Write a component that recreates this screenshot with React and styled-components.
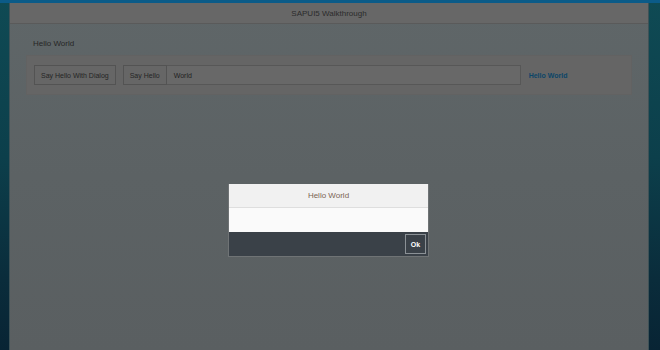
import React from "react";
import styled, { createGlobalStyle } from "styled-components";

const GlobalStyle = createGlobalStyle`
  html, body {
    margin: 0;
    padding: 0;
    background: #0c3e4a;
  }
  body {
    font-family: "Liberation Sans", Arial, sans-serif;
  }
`;

const Screen = styled.div`
  position: relative;
  width: 660px;
  height: 350px;
  overflow: hidden;
  display: flex;
  flex-direction: column;
  background: linear-gradient(180deg, #0f4a54 0%, #0c3f4b 45%, #0a2c3b 80%, #082434 100%);
`;

const TopStrip = styled.div`
  height: 3px;
  flex: none;
  background: #0b5b88;
`;

const Shell = styled.div`
  flex: 1;
  margin: 0 12px 0 10px;
  display: flex;
  flex-direction: column;
  background: linear-gradient(180deg, #5f6668 0%, #5c6264 50%, #5a5f61 100%);
  box-shadow: -1px 0 0 #3f5257, 1px 0 0 #3f5257;
`;

const ShellHeader = styled.div`
  height: 20px;
  flex: none;
  display: flex;
  align-items: center;
  justify-content: center;
  background: #676767;
  border-bottom: 1px solid #5a5a5a;
  color: #2b2b2b;
  font-size: 8px;
`;

const Page = styled.div`
  padding: 14px 16px 0 16px;
  display: flex;
  flex-direction: column;
`;

const PageTitle = styled.div`
  padding-left: 7px;
  height: 12px;
  line-height: 12px;
  font-size: 8px;
  color: #262626;
  margin-bottom: 5px;
`;

const Panel = styled.div`
  height: 40px;
  box-sizing: border-box;
  display: flex;
  align-items: center;
  padding: 0 7px;
  background: #656565;
  border: 1px solid #626262;
`;

const Button = styled.button`
  height: 20px;
  box-sizing: border-box;
  padding: 0 6px;
  margin: 0;
  background: #666666;
  border: 1px solid #535353;
  color: #252525;
  font-family: inherit;
  font-size: 7px;
  margin-right: ${(p) => p.$gap || 0}px;
`;

const Input = styled.div`
  width: 354px;
  height: 20px;
  box-sizing: border-box;
  display: flex;
  align-items: center;
  padding-left: 7px;
  background: #686868;
  border: 1px solid #575757;
  border-left: none;
  color: #1f1f1f;
  font-size: 7px;
  margin-right: 8px;
`;

const Result = styled.span`
  color: #0c4568;
  font-weight: bold;
  font-size: 7px;
`;

const Dialog = styled.div`
  position: absolute;
  left: 228px;
  top: 184px;
  width: 201px;
  box-sizing: border-box;
  border: 1px solid #6f7375;
  border-top: none;
  display: flex;
  flex-direction: column;
`;

const DialogHeader = styled.div`
  height: 23px;
  display: flex;
  align-items: center;
  justify-content: center;
  background: #f1f1f1;
  border-bottom: 1px solid #dedede;
  color: #7a6453;
  font-size: 8px;
`;

const DialogBody = styled.div`
  height: 24px;
  background: #fafafa;
`;

const DialogFooter = styled.div`
  height: 24px;
  display: flex;
  align-items: center;
  justify-content: flex-end;
  padding-right: 2px;
  background: #3a4148;
`;

const OkButton = styled.button`
  width: 21px;
  height: 20px;
  padding: 0;
  margin: 0;
  background: #3a4148;
  border: 1px solid #8b9196;
  color: #ffffff;
  font-family: inherit;
  font-weight: bold;
  font-size: 7px;
`;

export default function App() {
  return (
    <>
      <GlobalStyle />
      <Screen>
        <TopStrip />
        <Shell>
          <ShellHeader>SAPUI5 Walkthrough</ShellHeader>
          <Page>
            <PageTitle>Hello World</PageTitle>
            <Panel>
              <Button $gap={7}>Say Hello With Dialog</Button>
              <Button>Say Hello</Button>
              <Input>World</Input>
              <Result>Hello World</Result>
            </Panel>
          </Page>
        </Shell>
        <Dialog>
          <DialogHeader>Hello World</DialogHeader>
          <DialogBody />
          <DialogFooter>
            <OkButton>Ok</OkButton>
          </DialogFooter>
        </Dialog>
      </Screen>
    </>
  );
}
